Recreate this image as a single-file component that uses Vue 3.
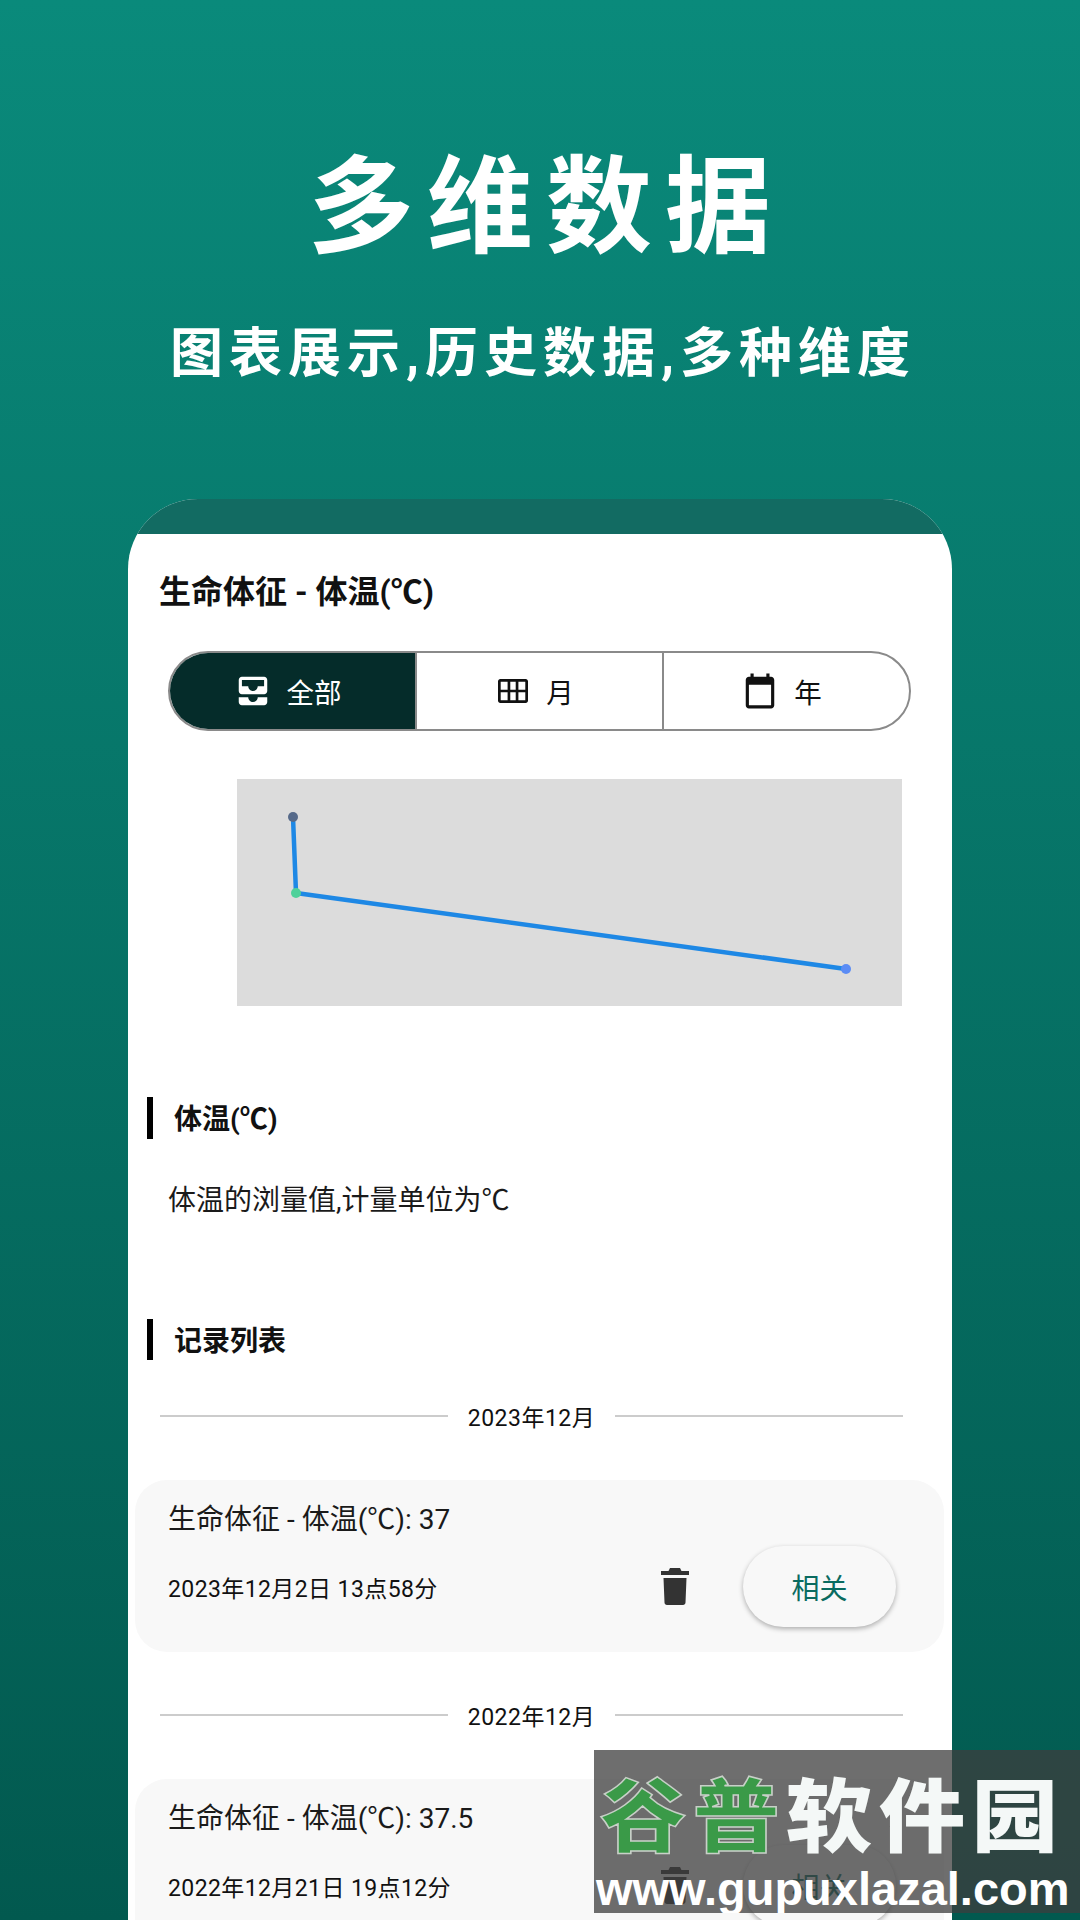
<template>
  <div class="page">
    <h1 class="headline">多维数据</h1>
    <p class="subline">图表展示,历史数据,多种维度</p>

    <div class="phone">
      <div class="status"></div>
      <h2 class="app-title">生命体征 - 体温(℃)</h2>

      <div class="seg">
        <div v-for="(tab, i) in tabs" :key="tab.label" class="seg-item" :class="{ active: i === 0 }">
          <svg class="seg-icon" :class="tab.icon" viewBox="0 0 24 24" fill="currentColor">
            <path :d="tab.path" />
          </svg>
          <span>{{ tab.label }}</span>
        </div>
      </div>

      <svg class="chart" viewBox="0 0 665 227">
        <polyline points="56,38 59,114 609,190" fill="none" stroke="#1e88e5" stroke-width="4.5" />
        <circle cx="56" cy="38" r="5" fill="#566a8a" />
        <circle cx="59" cy="114" r="5" fill="#4fd19a" />
        <circle cx="609" cy="190" r="5" fill="#5b8cf5" />
      </svg>

      <h3 class="section first">体温(℃)</h3>
      <p class="desc">体温的浏量值,计量单位为℃</p>
      <h3 class="section second">记录列表</h3>

      <div v-for="rec in records" :key="rec.month" class="group">
        <div class="month">
          <i></i>
          <span>{{ rec.month }}</span>
          <i></i>
        </div>
        <div class="record">
          <div class="record-value">生命体征 - 体温(℃): {{ rec.value }}</div>
          <div class="record-row">
            <span class="record-date">{{ rec.date }}</span>
            <svg class="trash" viewBox="0 0 28 37" fill="#333">
              <path d="M9 0h10l1.500 3H28v4H0V3h7.500z" />
              <path d="M2.500 10h23l-1 24.500c0 1.400-1.100 2.500-2.500 2.500H6c-1.400 0-2.500-1.100-2.500-2.500z" />
            </svg>
            <button class="related">相关</button>
          </div>
        </div>
      </div>
    </div>

    <div class="watermark">
      <div class="wm-name"><b>谷普</b>软件园</div>
      <div class="wm-url">www.gupuxlazal.com</div>
    </div>
  </div>
</template>

<script setup>
const tabs = [
  {
    label: '全部',
    icon: 'inbox',
    path: 'M19 3H5c-1.100 0-2 .9-2 2v7c0 1.100.9 2 2 2h14c1.100 0 2-.9 2-2V5c0-1.100-.9-2-2-2zm0 6h-4c0 1.620-1.380 3-3 3s-3-1.380-3-3H5V5h14v4zm-4 7h6v3c0 1.100-.9 2-2 2H5c-1.100 0-2-.9-2-2v-3h6c0 1.660 1.340 3 3 3s3-1.340 3-3z'
  },
  {
    label: '月',
    icon: 'grid',
    path: 'M3.500 4h17c.8 0 1.500.7 1.500 1.500v13c0 .8-.7 1.500-1.500 1.500h-17c-.8 0-1.500-.7-1.500-1.500v-13C2 4.700 2.700 4 3.500 4zM3.800 5.800v5.300h4.600V5.800zm6.400 0v5.300h3.600V5.800zm5.400 0v5.300h4.600V5.800zM3.800 12.900v5.300h4.600v-5.300zm6.400 0v5.300h3.600v-5.300zm5.400 0v5.300h4.600v-5.300z'
  },
  {
    label: '年',
    icon: 'calendar',
    path: 'M19 3h-1V1h-2v2H8V1H6v2H5c-1.100 0-2 .9-2 2v16c0 1.100.9 2 2 2h14c1.100 0 2-.9 2-2V5c0-1.100-.9-2-2-2zm0 18H5V8h14v13z'
  }
]

const records = [
  { month: '2023年12月', value: '37', date: '2023年12月2日 13点58分' },
  { month: '2022年12月', value: '37.5', date: '2022年12月21日 19点12分' }
]
</script>

<style>
html,
body {
  margin: 0;
}
</style>

<style scoped>
.page {
  position: relative;
  width: 1080px;
  height: 1920px;
  overflow: hidden;
  background: linear-gradient(180deg, #0a8a7b 0%, #02594f 100%);
  font-family: Roboto, "Noto Sans CJK SC", sans-serif;
  color: #111;
}

.headline {
  margin: 0;
  padding: 142px 0 0 12px;
  height: 132px;
  line-height: 132px;
  text-align: center;
  font-size: 106px;
  font-weight: 700;
  letter-spacing: 13px;
  color: #fff;
}

.subline {
  margin: 50px 0 0;
  padding-left: 6px;
  height: 60px;
  line-height: 60px;
  text-align: center;
  font-size: 53px;
  font-weight: 700;
  letter-spacing: 6px;
  color: #fff;
}

.phone {
  margin: 115px 128px 0;
  height: 1500px;
  background: #fff;
  border-radius: 70px 70px 0 0;
  overflow: hidden;
}

.status {
  height: 35px;
  background: #126b62;
}

.app-title {
  margin: 36px 0 0 31px;
  height: 44px;
  line-height: 44px;
  font-size: 32px;
  font-weight: 700;
  color: #111;
}

.seg {
  display: flex;
  margin: 37px 41px 0 40px;
  height: 80px;
  box-sizing: border-box;
  border: 2px solid #8a8a8a;
  border-radius: 40px;
  overflow: hidden;
}

.seg-item {
  flex: 1;
  display: flex;
  align-items: center;
  justify-content: center;
  gap: 15px;
  box-sizing: border-box;
  padding-right: 10px;
  font-size: 27.500px;
  color: #111;
}

.seg-item + .seg-item {
  border-left: 2px solid #8a8a8a;
}

.seg-item.active {
  background: #052c2a;
  color: #fff;
}

.seg-icon {
  width: 36px;
  height: 36px;
  flex: none;
}

.seg-icon.inbox,
.seg-icon.calendar {
  width: 38px;
  height: 38px;
}

.chart {
  display: block;
  margin: 48px 0 0 109px;
  width: 665px;
  height: 227px;
  background: #dcdcdc;
}

.section {
  margin: 0 0 0 19px;
  padding-left: 21px;
  border-left: 6px solid #000;
  font-size: 28px;
  font-weight: 700;
  color: #111;
}

.section.first {
  margin-top: 91px;
  height: 42px;
  line-height: 46px;
}

.section.second {
  margin-top: 98px;
  height: 41px;
  line-height: 45px;
}

.desc {
  margin: 42px 0 0 40px;
  height: 40px;
  line-height: 40px;
  font-size: 28px;
  color: #1a1a1a;
}

.group {
  display: flex;
  flex-direction: column;
}

.month {
  display: flex;
  align-items: center;
  justify-content: space-between;
  margin: 40px 49px 0 32px;
  height: 32px;
  font-size: 23px;
  letter-spacing: 0.500px;
  color: #111;
}

.group + .group .month {
  margin-top: 47px;
}

.month i {
  display: block;
  width: 288px;
  height: 2px;
  background: #cccccc;
}

.record {
  margin: 48px 8px 0 7px;
  height: 172px;
  box-sizing: border-box;
  padding: 20px 48px 0 33px;
  background: #f8f8f8;
  border-radius: 32px;
}

.record-value {
  height: 40px;
  line-height: 40px;
  font-size: 28px;
  color: #1a1a1a;
}

.record-row {
  display: flex;
  align-items: center;
  margin-top: 6px;
  height: 81px;
}

.record-date {
  flex: 1;
  font-size: 23px;
  letter-spacing: 0.400px;
  color: #111;
}

.trash {
  width: 28px;
  height: 37px;
  margin-right: 54px;
}

.related {
  width: 153px;
  height: 81px;
  padding: 0;
  border: 0;
  border-radius: 41px;
  background: #f8f8f8;
  box-shadow: 0 2px 5px rgba(0, 0, 0, 0.3);
  font-family: inherit;
  font-size: 28px;
  color: #0a6b60;
}

.watermark {
  position: absolute;
  left: 594px;
  top: 1750px;
  width: 486px;
  height: 163px;
  box-sizing: border-box;
  padding: 28px 0 0 6px;
  overflow: hidden;
  background: rgba(62, 62, 62, 0.75);
  color: #fff;
  white-space: nowrap;
}

.wm-name {
  height: 80px;
  line-height: 80px;
  font-size: 80px;
  font-weight: 900;
  letter-spacing: 6px;
  color: #f4f8f7;
  transform: scaleX(1.08);
  transform-origin: left center;
}

.wm-name b {
  font-weight: 900;
  color: #3a9a48;
  -webkit-text-stroke: 1.500px #c8d0c8;
}

.wm-url {
  margin: 7px 0 0 -4px;
  line-height: 48px;
  font-family: "Liberation Sans", sans-serif;
  font-size: 47px;
  font-weight: 700;
}
</style>
